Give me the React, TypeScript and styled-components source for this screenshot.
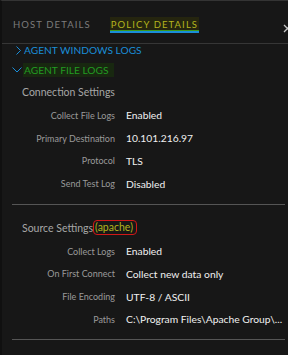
import React from "react";
import styled, { createGlobalStyle } from "styled-components";

const Global = createGlobalStyle`
  html, body { margin: 0; padding: 0; background: #171717; overflow: hidden; }
  body { font-family: Lato, "Open Sans", sans-serif; }
`;

const Panel = styled.div`
  width: 292px;
  height: 355px;
  box-sizing: border-box;
  background: #171717;
  border-top: 1px solid #343434;
  border-left: 2px solid #101010;
  overflow: hidden;
`;

const Tabs = styled.div`
  display: flex;
  align-items: flex-start;
  gap: 18px;
  height: 43px;
  box-sizing: border-box;
  padding: 16px 0 0 10px;
  border-bottom: 1px solid #363636;
`;

const Tab = styled.div<{ $active?: boolean }>`
  height: 14px;
  line-height: 16px;
  padding: 0 1px;
  font-size: 9.5px;
  letter-spacing: 1.1px;
  text-transform: uppercase;
  color: ${(p) => (p.$active ? "#b4b41e" : "#7c7c7c")};
  background: ${(p) => (p.$active ? "#25250f" : "transparent")};
  border-bottom: 2px solid ${(p) => (p.$active ? "#1a8ed8" : "transparent")};
  box-shadow: ${(p) => (p.$active ? "inset 0 -1px 0 #3d9a1c" : "none")};
`;

const Close = styled.div`
  margin-left: auto;
  margin-top: 7px;
  margin-right: 0px;
  width: 9px;
  height: 9px;
  display: flex;
`;

const Tree = styled.div`
  margin-top: -4px;
`;

const TreeItem = styled.div<{ $color: string }>`
  display: flex;
  align-items: center;
  height: 20px;
  padding-left: 10px;
  gap: 1px;
  color: ${(p) => p.$color};
  font-size: 10.2px;
`;

const ChevronBox = styled.span<{ $end?: boolean }>`
  width: 10px;
  display: flex;
  justify-content: ${(p) => (p.$end ? "flex-end" : "center")};
  padding-right: ${(p) => (p.$end ? "1px" : "0")};
  box-sizing: border-box;
`;

const TreeLabel = styled.span<{ $hl?: boolean }>`
  background: ${(p) => (p.$hl ? "#182810" : "transparent")};
  line-height: 14px;
  padding: 0 ${(p) => (p.$hl ? "6px" : "1px")} 0 1px;
`;

const Section = styled.div<{ $top: number }>`
  padding: ${(p) => p.$top}px 0 0 20px;
`;

const Heading = styled.div`
  height: 24px;
  font-size: 10.5px;
  color: #a6a6a6;
  display: flex;
  align-items: center;
`;

const Tag = styled.span`
  color: #b4b41e;
  border: 1px solid #d01818;
  border-radius: 4px;
  line-height: 12px;
  padding: 0 3px 1px 1px;
`;

const Row = styled.div`
  display: grid;
  grid-template-columns: 93px 1fr;
  column-gap: 11px;
  height: 22.8px;
  align-items: center;
`;

const Label = styled.div`
  text-align: right;
  font-size: 9px;
  color: #9a9a9a;
  white-space: nowrap;
`;

const Value = styled.div`
  font-size: 10.3px;
  color: #f0f0f0;
  white-space: nowrap;
`;

const Divider = styled.div`
  height: 1px;
  background: #555;
  margin: 8.5px 7px 0 10px;
`;

const Right = () => (
  <svg width="5" height="9" viewBox="0 0 5 9">
    <path d="M0.5 0.5 L4.5 4.5 L0.5 8.5" fill="none" stroke="#1a8ed8" strokeWidth="1" />
  </svg>
);

const Down = () => (
  <svg width="10" height="6" viewBox="0 0 10 6">
    <path d="M0.5 0.5 L5 5 L9.5 0.5" fill="none" stroke="#1a8ed8" strokeWidth="1" />
  </svg>
);

const rows1 = [
  ["Collect File Logs", "Enabled"],
  ["Primary Destination", "10.101.216.97"],
  ["Protocol", "TLS"],
  ["Send Test Log", "Disabled"],
];
const rows2 = [
  ["Collect Logs", "Enabled"],
  ["On First Connect", "Collect new data only"],
  ["File Encoding", "UTF-8 / ASCII"],
  ["Paths", "C:\\Program Files\\Apache Group\\..."],
];

export default function App() {
  return (
    <>
      <Global />
      <Panel>
        <Tabs>
          <Tab>Host Details</Tab>
          <Tab $active>Policy Details</Tab>
          <Close>
            <svg width="9" height="9" viewBox="0 0 9 9">
              <path d="M1 1 L8 8 M8 1 L1 8" stroke="#c4c4c4" strokeWidth="1.3" />
            </svg>
          </Close>
        </Tabs>
        <Tree>
          <TreeItem $color="#1a8ed8">
            <ChevronBox $end><Right /></ChevronBox>
            <TreeLabel>AGENT WINDOWS LOGS</TreeLabel>
          </TreeItem>
          <TreeItem $color="#229c22">
            <ChevronBox><Down /></ChevronBox>
            <TreeLabel $hl>AGENT FILE LOGS</TreeLabel>
          </TreeItem>
        </Tree>
        <Section $top={0}>
          <Heading>Connection Settings</Heading>
          {rows1.map(([l, v]) => (
            <Row key={l}>
              <Label>{l}</Label>
              <Value>{v}</Value>
            </Row>
          ))}
        </Section>
        <Divider />
        <Section $top={11}>
          <Heading>
            Source Settings<Tag>(apache)</Tag>
          </Heading>
          {rows2.map(([l, v]) => (
            <Row key={l}>
              <Label>{l}</Label>
              <Value>{v}</Value>
            </Row>
          ))}
        </Section>
        <Divider />
      </Panel>
    </>
  );
}
